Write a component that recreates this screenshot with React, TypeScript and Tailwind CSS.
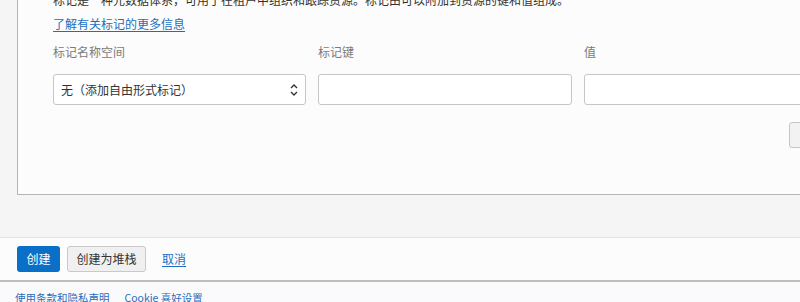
import React from "react";

export default function App() {
  const font = { fontFamily: '"Noto Sans CJK SC", "Noto Sans", sans-serif' };
  return (
    <div
      className="w-[800px] h-[302px] overflow-hidden bg-[#f5f5f5] flex flex-col text-[12px] text-[#333]"
      style={font}
    >
      <div className="ml-[17px] h-[195px] shrink-0 border-l border-b border-[#b5b5b5] bg-[#fcfcfc] pl-[35px] overflow-hidden">
        <div className="-mt-[10px] leading-[20px] whitespace-nowrap text-[#333]">
          标记是一种元数据体系，可用于在租户中组织和跟踪资源。标记由可以附加到资源的键和值组成。
        </div>
        <div className="mt-[4px] leading-[20px]">
          <a className="text-[#1b6fc2] underline underline-offset-2 cursor-pointer">了解有关标记的更多信息</a>
        </div>
        <div className="mt-[8px] flex gap-[12px] leading-[20px] text-[#7a7a7a]">
          <div className="w-[253px] shrink-0">
            <div>标记名称空间</div>
            <div className="mt-[12px] h-[31px] rounded-[3px] border border-[#c6c6c6] bg-white flex items-center justify-between pl-[7px] pr-[6px] text-[#333]">
              <span>无（添加自由形式标记）</span>
              <svg width="10" height="14" viewBox="0 0 10 14" fill="none" stroke="#333" strokeWidth="1.4">
                <path d="M2 5 L5 2 L8 5" />
                <path d="M2 9 L5 12 L8 9" />
              </svg>
            </div>
          </div>
          <div className="w-[254px] shrink-0">
            <div>标记键</div>
            <div className="mt-[12px] h-[31px] rounded-[3px] border border-[#c6c6c6] bg-white" />
          </div>
          <div className="w-[260px] shrink-0">
            <div>值</div>
            <div className="mt-[12px] h-[31px] rounded-[3px] border border-[#c6c6c6] bg-white" />
          </div>
        </div>
        <div className="mt-[17px] flex">
          <div className="ml-[736px] w-[40px] h-[26px] shrink-0 rounded-[3px] border border-[#c6c6c6] bg-[#f2f2f2]" />
        </div>
      </div>
      <div className="h-[42px] shrink-0" />
      <div className="h-[45px] shrink-0 border-t border-[#e2e2e2] border-b-2 border-b-[#bdbdbd] bg-[#fcfcfc] flex items-center pl-[17px]">
        <button className="h-[26px] w-[43px] rounded-[3px] bg-[#0a6fc7] text-white text-[12px] leading-none">
          创建
        </button>
        <button className="ml-[7px] h-[26px] w-[79px] rounded-[3px] bg-[#f0f0f0] border border-[#c9c9c9] text-[#333] text-[12px] leading-none">
          创建为堆栈
        </button>
        <a className="ml-[16px] text-[#1b6fc2] underline underline-offset-2 cursor-pointer">取消</a>
      </div>
      <div className="flex-1 bg-[#fafafc] flex items-start pl-[15px] pt-[8px] text-[10.5px] text-[#2b6cb8] leading-[16px]">
        <span>使用条款和隐私声明</span>
        <span className="ml-[15px]">Cookie 喜好设置</span>
      </div>
    </div>
  );
}
